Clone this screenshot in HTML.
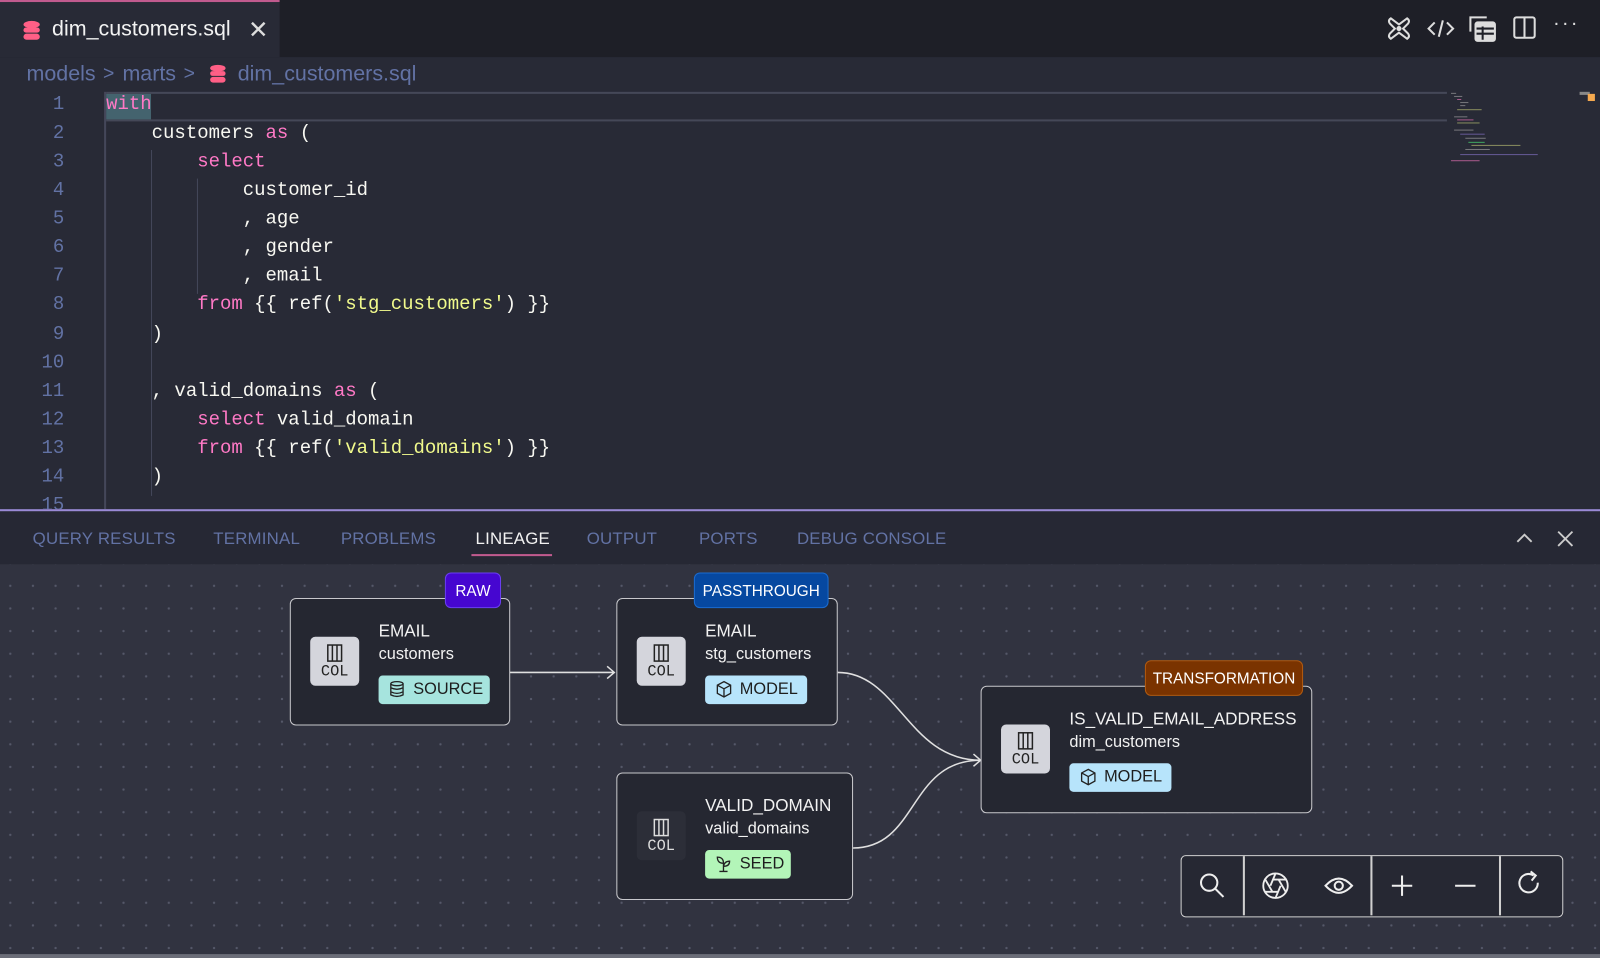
<!DOCTYPE html>
<html><head><meta charset="utf-8">
<style>
*{box-sizing:border-box;margin:0;padding:0}
body{width:1600px;height:956px;overflow:hidden;background:#282a36;font-family:"Liberation Sans",sans-serif;position:relative}
#root{position:absolute;left:0;top:0;width:1568px;height:937px;transform:scale(1.020408);transform-origin:0 0;background:#282a36}
.tabbar{position:absolute;left:0;top:0;width:1568px;height:56px;background:#1e1f27}
.tab{position:absolute;left:0;top:0;width:274px;height:56px;background:#282a36;border-top:2px solid #c05a8e}
.tab .name{position:absolute;left:51px;top:15px;font-size:21px;color:#f2f2f2}
.tab .x{position:absolute;left:243px;top:13px;font-size:24px;color:#ddd}
.crumbs span{position:absolute;top:61px;font-size:21px;color:#6272a4;white-space:pre}
.code{position:absolute;left:0;top:89px;width:1568px;height:410px;font-family:"Liberation Mono",monospace;font-size:18.6px;color:#f8f8f2;overflow:hidden}
.ln{position:absolute;left:0;width:63px;text-align:right;color:#6272a4}
.cl{position:absolute;left:104px;white-space:pre}
.k{color:#ff79c6}.s{color:#f1fa8c}
.guide{position:absolute;width:1px;background:#44475a}
.panel{position:absolute;left:0;top:499px;width:1568px;height:438px;background:#262834;border-top:2px solid #9a8ad6}
.ptabs span{position:absolute;top:18px;font-size:16.5px;color:#6272a4;letter-spacing:.2px}
.graph{position:absolute;left:0;top:52px;width:1568px;height:382px;background-color:#313340;background-image:radial-gradient(circle,#555869 1px,transparent 1.3px);background-size:22.2px 22.2px;background-position:-1px 10px;overflow:hidden}
.inner{position:absolute;left:0;top:-8px;width:1568px;height:400px}
.node{position:absolute;border:1.5px solid #c8c8cc;border-radius:6px;background:#252731}
.col{position:absolute;width:48px;height:48px;border-radius:5px;background:#d4d5dc;color:#222;font-family:"Liberation Mono",monospace;font-size:15px;text-align:center;padding-top:26px}
.col.dark{background:#2c2e38;color:#ddd}
.col svg{position:absolute;left:16px;top:7px}
.t1{position:absolute;font-size:16.8px;color:#f2f2f2}
.t2{position:absolute;font-size:16px;color:#f2f2f2}
.pill{position:absolute;height:28px;border-radius:4px;font-size:16px;color:#1d1d1d;padding:5px 10px 0 34px}
.pill svg{position:absolute;left:10px;top:5px}
.badge{position:absolute;height:35px;border-radius:6px;font-size:15px;color:#fff;text-align:center;padding-top:9px;border:1.5px solid}
.tools{position:absolute;left:1157px;top:293px;width:375px;height:61px;border:1.5px solid #d0d0d0;border-radius:5px;background:#262833}
.tools .sep{position:absolute;top:0;width:2px;height:58px;background:#d0d0d0}
.mm{position:absolute;height:1px;opacity:.6}
</style></head><body>
<div id="root">
<div class="tabbar">
 <div class="tab">
  <svg style="position:absolute;left:22px;top:18px" width="18" height="20" viewBox="0 0 18 20"><ellipse cx="9" cy="4" rx="8" ry="3.5" fill="#ff5f86"/><rect x="1" y="7" width="16" height="5" rx="2.5" fill="#ff5f86"/><rect x="1" y="13" width="16" height="6" rx="3" fill="#ff5f86"/></svg>
  <div class="name">dim_customers.sql</div><div class="x">✕</div>
 </div>
 <svg style="position:absolute;left:1358px;top:15px" width="26" height="26" viewBox="0 0 26 26" fill="none" stroke="#ddd" stroke-width="2"><path d="M5 3 L13 9 L21 3 Q24 5 22 8 L17 13 L22 18 Q24 21 21 23 L13 17 L5 23 Q2 21 4 18 L9 13 L4 8 Q2 5 5 3Z"/><circle cx="13" cy="13" r="1.5" fill="#ddd"/></svg>
 <svg style="position:absolute;left:1398px;top:16px" width="28" height="24" viewBox="0 0 28 24" fill="none" stroke="#ddd" stroke-width="2"><path d="M8 6 L2 12 L8 18 M20 6 L26 12 L20 18 M16 4 L12 20"/></svg>
 <svg style="position:absolute;left:1438px;top:13px" width="30" height="30" viewBox="0 0 30 30" fill="none" stroke="#ddd" stroke-width="2"><path d="M3 18 V4 H19"/><rect x="8" y="9" width="19" height="18" rx="2" fill="#ddd"/><path d="M9 15 H26 M9 20 H26 M15 13 V26" stroke="#1e1f27"/></svg>
 <svg style="position:absolute;left:1482px;top:15px" width="24" height="24" viewBox="0 0 24 24" fill="none" stroke="#ddd" stroke-width="2"><rect x="2" y="2" width="20" height="20" rx="2"/><path d="M12 2 V22"/></svg>
 <div style="position:absolute;left:1522px;top:12px;color:#ddd;font-size:20px;letter-spacing:2px">···</div>
</div>
<div class="crumbs"><span style="left:26px">models</span><span style="left:101px;font-size:19px;top:62px">&gt;</span><span style="left:120px">marts</span><span style="left:180px;font-size:19px;top:62px">&gt;</span><span style="left:233px">dim_customers.sql</span></div>
<svg style="position:absolute;left:205px;top:63px" width="17" height="19" viewBox="0 0 18 20"><ellipse cx="9" cy="4" rx="8" ry="3.5" fill="#ff5f86"/><rect x="1" y="7" width="16" height="5" rx="2.5" fill="#ff5f86"/><rect x="1" y="13" width="16" height="6" rx="3" fill="#ff5f86"/></svg>
<div class="code">
 <div style="position:absolute;left:104px;top:1px;width:1314px;height:29px;border-top:2px solid #454858;border-bottom:2px solid #454858"></div>
 <div style="position:absolute;left:104px;top:3px;width:44px;height:25px;background:#44636e"></div>
 <div style="position:absolute;left:102px;top:1px;width:2px;height:420px;background:#44475a"></div>
 <div class="guide" style="left:148px;top:58px;height:254px"></div>
 <div class="guide" style="left:193px;top:86px;height:113px"></div>
 <div class="guide" style="left:148px;top:311px;height:86px"></div>
 <div class="ln" style="top:3px">1</div><div class="cl k" style="top:3px">with</div>
 <div class="ln" style="top:31px">2</div><div class="cl" style="top:31px">    customers <span class="k">as</span> (</div>
 <div class="ln" style="top:59px">3</div><div class="cl k" style="top:59px">        select</div>
 <div class="ln" style="top:87px">4</div><div class="cl" style="top:87px">            customer_id</div>
 <div class="ln" style="top:115px">5</div><div class="cl" style="top:115px">            , age</div>
 <div class="ln" style="top:143px">6</div><div class="cl" style="top:143px">            , gender</div>
 <div class="ln" style="top:171px">7</div><div class="cl" style="top:171px">            , email</div>
 <div class="ln" style="top:199px">8</div><div class="cl" style="top:199px">        <span class="k">from</span> {{ ref(<span class="s">'stg_customers'</span>) }}</div>
 <div class="ln" style="top:228px">9</div><div class="cl" style="top:228px">    )</div>
 <div class="ln" style="top:256px">10</div>
 <div class="ln" style="top:284px">11</div><div class="cl" style="top:284px">    , valid_domains <span class="k">as</span> (</div>
 <div class="ln" style="top:312px">12</div><div class="cl" style="top:312px">        <span class="k">select</span> valid_domain</div>
 <div class="ln" style="top:340px">13</div><div class="cl" style="top:340px">        <span class="k">from</span> {{ ref(<span class="s">'valid_domains'</span>) }}</div>
 <div class="ln" style="top:368px">14</div><div class="cl" style="top:368px">    )</div>
 <div class="ln" style="top:396px">15</div>
 <div class="mm" style="left:1422px;top:2px;width:5px;background:#aaa"></div>
 <div class="mm" style="left:1425px;top:5px;width:8px;background:#aaa"></div>
 <div class="mm" style="left:1428px;top:8px;width:4px;background:#ff79c6"></div>
 <div class="mm" style="left:1431px;top:11px;width:8px;background:#aaa"></div>
 <div class="mm" style="left:1431px;top:14px;width:5px;background:#aaa"></div>
 <div class="mm" style="left:1428px;top:18px;width:24px;background:#c8cf7a"></div>
 <div class="mm" style="left:1425px;top:25px;width:13px;background:#aaa"></div>
 <div class="mm" style="left:1428px;top:28px;width:16px;background:#ff79c6"></div>
 <div class="mm" style="left:1428px;top:31px;width:22px;background:#c8cf7a"></div>
 <div class="mm" style="left:1425px;top:38px;width:19px;background:#aaa"></div>
 <div class="mm" style="left:1431px;top:42px;width:24px;background:#8d7ad6"></div>
 <div class="mm" style="left:1436px;top:46px;width:20px;background:#aaa"></div>
 <div class="mm" style="left:1439px;top:50px;width:16px;background:#50fa7b"></div>
 <div class="mm" style="left:1442px;top:53px;width:48px;background:#c8cf7a"></div>
 <div class="mm" style="left:1436px;top:57px;width:24px;background:#aaa"></div>
 <div class="mm" style="left:1431px;top:62px;width:76px;background:#8d7ad6"></div>
 <div class="mm" style="left:1422px;top:68px;width:28px;background:#ff79c6"></div>
 <div style="position:absolute;left:1548px;top:1px;width:10px;height:3px;background:#888"></div>
 <div style="position:absolute;left:1556px;top:3px;width:7px;height:7px;background:#f5a94f"></div>
</div>
<div class="panel">
 <div class="ptabs">
  <span style="left:32px">QUERY RESULTS</span><span style="left:209px">TERMINAL</span><span style="left:334px">PROBLEMS</span>
  <span style="left:466px;color:#f2f2f2">LINEAGE</span><span style="left:575px">OUTPUT</span><span style="left:685px">PORTS</span><span style="left:781px">DEBUG CONSOLE</span>
 </div>
 <div style="position:absolute;left:462px;top:42px;width:79px;height:2px;background:#c05a8e"></div>
 <svg style="position:absolute;left:1484px;top:19px" width="20" height="14" viewBox="0 0 20 14" fill="none" stroke="#ccc" stroke-width="1.8"><path d="M3 11 L10 4 L17 11"/></svg>
 <svg style="position:absolute;left:1525px;top:18px" width="18" height="18" viewBox="0 0 18 18" fill="none" stroke="#ccc" stroke-width="1.8"><path d="M2 2 L16 16 M16 2 L2 16"/></svg>
 <div class="graph"><div class="inner">
  <svg style="position:absolute;left:0;top:0" width="1568" height="400" fill="none" stroke="#e0e0e0" stroke-width="1.5">
   <path d="M499 114 H602 M595 108 L602 114 L595 120"/>
   <path d="M821 114 C880 114 890 200 961 200"/>
   <path d="M836 286 C900 286 890 200 961 200 M954 194 L961 200 L954 206"/>
  </svg>
  <div class="node" style="left:284px;top:41px;width:216px;height:125px">
   <div class="col" style="left:19px;top:37px"><svg width="16" height="18" viewBox="0 0 14 16" fill="none" stroke="#222" stroke-width="1.3"><rect x="1" y="1" width="12" height="14"/><path d="M5 1 V15 M9 1 V15"/></svg>COL</div>
   <div class="t1" style="left:86px;top:22px">EMAIL</div><div class="t2" style="left:86px;top:46px">customers</div>
   <div class="pill" style="left:86px;top:75px;background:#a6e4de;width:109px">SOURCE<svg width="16" height="17" viewBox="0 0 16 17" fill="none" stroke="#222" stroke-width="1.3"><ellipse cx="8" cy="3" rx="6" ry="2"/><path d="M2 3 V14 Q8 17 14 14 V3 M2 7 Q8 10 14 7 M2 11 Q8 14 14 11"/></svg></div>
  </div>
  <div class="badge" style="left:436px;top:16px;width:55px;background:#4606d0;border-color:#6a3ff0">RAW</div>
  <div class="node" style="left:604px;top:41px;width:217px;height:125px">
   <div class="col" style="left:19px;top:37px"><svg width="16" height="18" viewBox="0 0 14 16" fill="none" stroke="#222" stroke-width="1.3"><rect x="1" y="1" width="12" height="14"/><path d="M5 1 V15 M9 1 V15"/></svg>COL</div>
   <div class="t1" style="left:86px;top:22px">EMAIL</div><div class="t2" style="left:86px;top:46px">stg_customers</div>
   <div class="pill" style="left:86px;top:75px;background:#b7e4fb;width:100px">MODEL<svg width="17" height="17" viewBox="0 0 17 17" fill="none" stroke="#222" stroke-width="1.3"><path d="M8.5 1 L15 4.5 V12.5 L8.5 16 L2 12.5 V4.5Z M2 4.5 L8.5 8 L15 4.5 M8.5 8 V16"/></svg></div>
  </div>
  <div class="badge" style="left:680px;top:16px;width:132px;background:#0648a0;border-color:#1a6bd0">PASSTHROUGH</div>
  <div class="node" style="left:604px;top:212px;width:232px;height:125px">
   <div class="col dark" style="left:19px;top:37px"><svg width="16" height="18" viewBox="0 0 14 16" fill="none" stroke="#ddd" stroke-width="1.3"><rect x="1" y="1" width="12" height="14"/><path d="M5 1 V15 M9 1 V15"/></svg>COL</div>
   <div class="t1" style="left:86px;top:22px">VALID_DOMAIN</div><div class="t2" style="left:86px;top:46px">valid_domains</div>
   <div class="pill" style="left:86px;top:75px;background:#b3f5b8;width:84px">SEED<svg width="16" height="17" viewBox="0 0 16 17" fill="none" stroke="#222" stroke-width="1.3"><path d="M8 16 V8 M8 8 Q2 8 2 2 Q8 2 8 8 M8 11 Q14 11 14 6 Q9 6 8 11 M4 16 H12"/></svg></div>
  </div>
  <div class="node" style="left:961px;top:127px;width:325px;height:125px">
   <div class="col" style="left:19px;top:37px"><svg width="16" height="18" viewBox="0 0 14 16" fill="none" stroke="#222" stroke-width="1.3"><rect x="1" y="1" width="12" height="14"/><path d="M5 1 V15 M9 1 V15"/></svg>COL</div>
   <div class="t1" style="left:86px;top:22px">IS_VALID_EMAIL_ADDRESS</div><div class="t2" style="left:86px;top:46px">dim_customers</div>
   <div class="pill" style="left:86px;top:75px;background:#b7e4fb;width:100px">MODEL<svg width="17" height="17" viewBox="0 0 17 17" fill="none" stroke="#222" stroke-width="1.3"><path d="M8.5 1 L15 4.5 V12.5 L8.5 16 L2 12.5 V4.5Z M2 4.5 L8.5 8 L15 4.5 M8.5 8 V16"/></svg></div>
  </div>
  <div class="badge" style="left:1122px;top:102px;width:155px;background:#7a3300;border-color:#b05a10">TRANSFORMATION</div>
  <div class="tools">
   <div class="sep" style="left:60px"></div><div class="sep" style="left:185px"></div><div class="sep" style="left:311px"></div>
   <svg style="position:absolute;left:16px;top:15px" width="28" height="28" viewBox="0 0 28 28" fill="none" stroke="#eee" stroke-width="2"><circle cx="11" cy="11" r="8"/><path d="M17 17 L25 25"/></svg>
   <svg style="position:absolute;left:78px;top:15px" width="28" height="28" viewBox="0 0 28 28" fill="none" stroke="#eee" stroke-width="1.8"><circle cx="14" cy="14" r="12"/><path d="M14 2 L9 14 M24 8 L11 8 M24 20 L17 8 M14 26 L19 14 M4 20 L17 20 M4 8 L11 20"/></svg>
   <svg style="position:absolute;left:139px;top:17px" width="30" height="24" viewBox="0 0 30 24" fill="none" stroke="#eee" stroke-width="2"><path d="M2 12 Q15 -2 28 12 Q15 26 2 12Z"/><circle cx="15" cy="12" r="4"/></svg>
   <svg style="position:absolute;left:204px;top:17px" width="24" height="24" viewBox="0 0 24 24" fill="none" stroke="#eee" stroke-width="2"><path d="M12 2 V22 M2 12 H22"/></svg>
   <svg style="position:absolute;left:266px;top:17px" width="24" height="24" viewBox="0 0 24 24" fill="none" stroke="#eee" stroke-width="2"><path d="M2 12 H22"/></svg>
   <svg style="position:absolute;left:327px;top:14px" width="28" height="28" viewBox="0 0 28 28" fill="none" stroke="#eee" stroke-width="2"><path d="M22 12 A9 9 0 1 1 18 5 M15 1 L20 5 L16 10"/></svg>
  </div>
 </div></div>
 <div style="position:absolute;left:0;top:434px;width:1568px;height:4px;background:#6b6d78"></div>
</div>
</div>
</body></html>
